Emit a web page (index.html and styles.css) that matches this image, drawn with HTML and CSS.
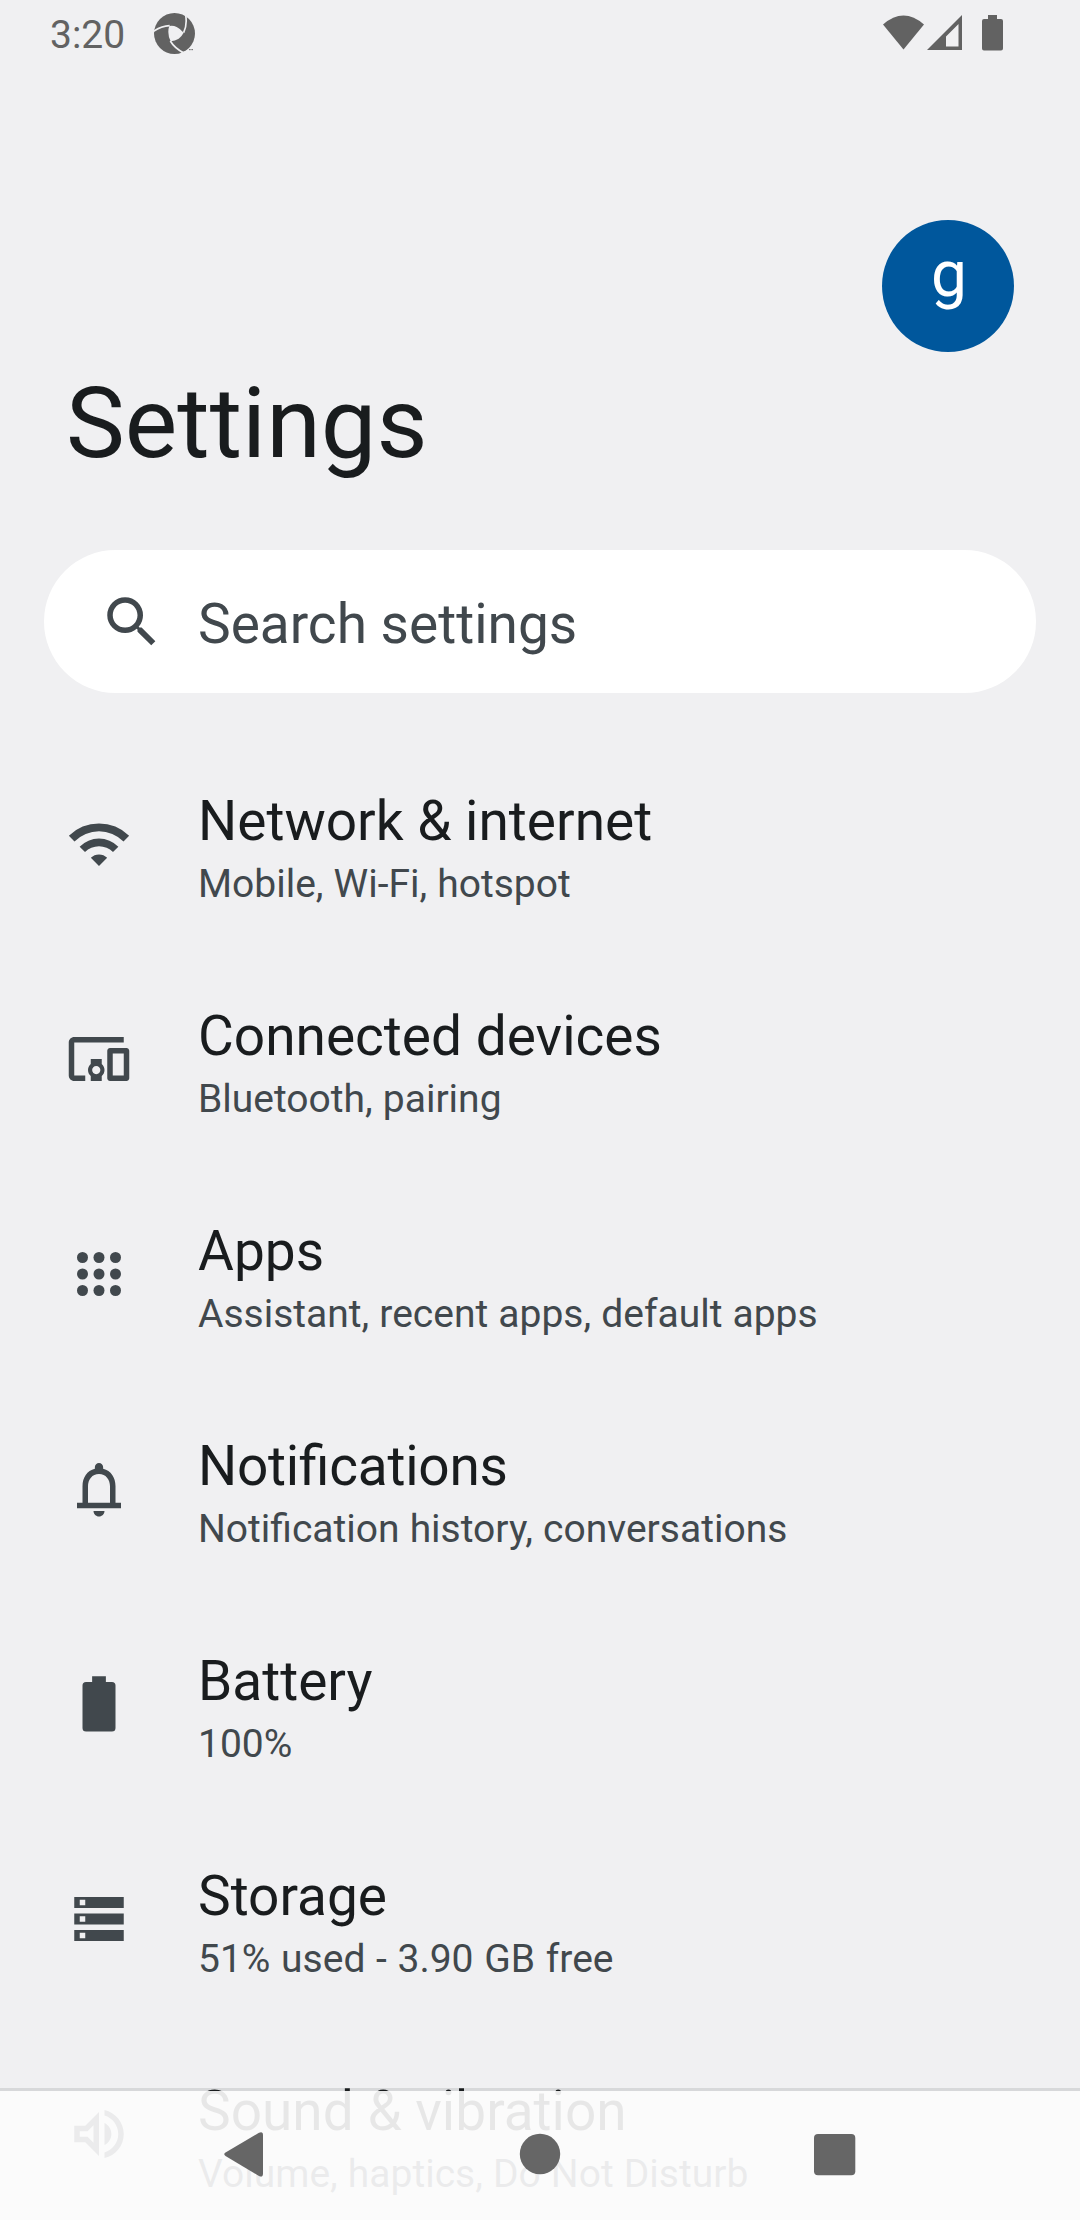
FILE: index.html
```html
<!DOCTYPE html>
<html lang="en">
<head>
<meta charset="utf-8">
<title>Settings</title>
<link rel="stylesheet" href="styles.css">
</head>
<body>
<div class="screen">
  <header class="status">
    <span class="clock">3:20</span>
    <svg class="shutter" viewBox="0 0 123 123">
      <circle cx="61.5" cy="61.5" r="61.5" fill="#626262"/>
      <path d="M46 39Q58 37 68 42Q80 48 89 59Q84 69 74 77Q63 84 50 85Q43 72 43 57Q43 46 46 39Z" fill="#f0f0f2"/>
      <path d="M47 38Q22 39 -2 55M89 59Q100 36 95 6M49 84Q61 105 91 121" fill="none" stroke="#f0f0f2" stroke-width="5"/>
      <path d="M101 9L104 14M80 119L116 105L125 125L80 125Z" fill="#f0f0f2"/>
      <path d="M105 110h5M112 110h5" stroke="#626262" stroke-width="3"/>
    </svg>
    <svg class="signals" viewBox="0 0 120 36">
      <path d="M0 9.500Q20.500-8.500 41 9.500L20.500 34.500Z"/>
      <path d="M44 35L79 0V35ZM63 31.500H75.500V9L63 21.500Z" fill-rule="evenodd"/>
      <path d="M105 0h9v4h4a2 2 0 0 1 2 2v27.500a2 2 0 0 1-2 2h-17a2 2 0 0 1-2-2V6a2 2 0 0 1 2-2h4z"/>
    </svg>
  </header>

  <div class="account"><div class="avatar">g</div></div>
  <h1 class="title">Settings</h1>

  <div class="search">
    <svg class="icon" viewBox="0 0 24 24"><path d="M15.500 14h-.79l-.28-.27A6.471 6.471 0 0 0 16 9.500 6.500 6.500 0 1 0 9.500 16c1.610 0 3.090-.59 4.230-1.570l.27.28v.79l5 4.990L20.490 19l-4.990-5zm-6 0C7.010 14 5 11.990 5 9.500S7.010 5 9.500 5 14 7.010 14 9.500 11.990 14 9.500 14z"/></svg>
    <span>Search settings</span>
  </div>

  <main class="list">
    <div class="row">
      <svg class="icon" viewBox="0 0 24 24"><path d="M1.040 9.040A15.500 15.500 0 0 1 22.960 9.040L20.910 11.090A12.600 12.600 0 0 0 3.090 11.090ZM4.960 12.960A9.950 9.950 0 0 1 19.040 12.960L17.090 14.910A7.200 7.200 0 0 0 6.910 14.910ZM9.030 17.030A4.200 4.200 0 0 1 14.970 17.030L12 20Z"/></svg>
      <div class="text"><div class="name">Network &amp; internet</div><div class="summary">Mobile, Wi-Fi, hotspot</div></div>
    </div>
    <div class="row">
      <svg class="icon" viewBox="0 0 24 24"><path d="M3 6h18V4H3c-1.100 0-2 .9-2 2v12c0 1.100.9 2 2 2h4v-2H3V6zm10 6H9v1.780c-.61.55-1 1.330-1 2.220s.39 1.670 1 2.220V20h4v-1.780c.61-.55 1-1.340 1-2.220s-.39-1.670-1-2.220V12zm-2 5.500c-.83 0-1.500-.67-1.500-1.500s.67-1.500 1.500-1.500 1.500.67 1.500 1.500-.67 1.500-1.500 1.500zM22 8h-6c-.5 0-1 .5-1 1v10c0 .5.5 1 1 1h6c.5 0 1-.5 1-1V9c0-.5-.5-1-1-1zm-1 10h-4v-8h4v8z"/></svg>
      <div class="text"><div class="name">Connected devices</div><div class="summary">Bluetooth, pairing</div></div>
    </div>
    <div class="row">
      <svg class="icon" viewBox="0 0 24 24"><circle cx="6" cy="6" r="2"/><circle cx="12" cy="6" r="2"/><circle cx="18" cy="6" r="2"/><circle cx="6" cy="12" r="2"/><circle cx="12" cy="12" r="2"/><circle cx="18" cy="12" r="2"/><circle cx="6" cy="18" r="2"/><circle cx="12" cy="18" r="2"/><circle cx="18" cy="18" r="2"/></svg>
      <div class="text"><div class="name">Apps</div><div class="summary">Assistant, recent apps, default apps</div></div>
    </div>
    <div class="row">
      <svg class="icon" viewBox="0 0 24 24"><path d="M18 17v-6c0-3.070-1.630-5.640-4.500-6.320V4c0-.83-.67-1.500-1.500-1.500s-1.500.67-1.500 1.500v.68C7.640 5.360 6 7.920 6 11v6H4v2h16v-2h-2zm-2 0H8v-6c0-2.480 1.510-4.500 4-4.500s4 2.020 4 4.500v6zM12 22c1.100 0 2-.9 2-2h-4c0 1.100.9 2 2 2z"/></svg>
      <div class="text"><div class="name name-tight">Notifications</div><div class="summary">Notification history, conversations</div></div>
    </div>
    <div class="row">
      <svg class="icon" viewBox="0 0 24 24"><path d="M9.500 1.900h5V4h2.200A1.300 1.300 0 0 1 18 5.300v15.400a1.300 1.300 0 0 1-1.300 1.300H7.300A1.300 1.300 0 0 1 6 20.700V5.300A1.300 1.300 0 0 1 7.300 4h2.200z"/></svg>
      <div class="text"><div class="name">Battery</div><div class="summary">100%</div></div>
    </div>
    <div class="row">
      <svg class="icon" viewBox="0 0 24 24"><path fill-rule="evenodd" d="M3 4h18v4H3zM5 5v2h2V5zM3 10h18v4H3zM5 11v2h2v-2zM3 16h18v4H3zM5 17v2h2v-2z"/></svg>
      <div class="text"><div class="name">Storage</div><div class="summary summary-figures">51% used - 3.90 GB free</div></div>
    </div>
    <div class="row">
      <svg class="icon" viewBox="0 0 24 24"><path d="M3 9v6h4l5 5V4L7 9H3zm7-.17v6.340L7.830 13H5v-2h2.830L10 8.830zM16.500 12c0-1.770-1.020-3.290-2.500-4.030v8.050c1.480-.73 2.500-2.250 2.500-4.020zM14 3.230v2.060c2.890.86 5 3.540 5 6.710s-2.110 5.850-5 6.710v2.060c4.010-.91 7-4.490 7-8.770s-2.990-7.860-7-8.770z"/></svg>
      <div class="text"><div class="name">Sound &amp; vibration</div><div class="summary">Volume, haptics, Do Not Disturb</div></div>
    </div>
  </main>

  <div class="divider"></div>
  <nav class="navbar">
    <svg viewBox="0 0 48 48"><path d="M41 5V43.500Q41 48 37 46L3.500 26Q1 24.300 3.500 22.600L37 2.700Q41 1 41 5Z"/></svg>
    <svg viewBox="0 0 48 48"><circle cx="24" cy="24" r="20.200"/></svg>
    <svg viewBox="0 0 48 48"><rect x="4" y="4" width="41.300" height="41.300" rx="4"/></svg>
  </nav>
</div>
</body>
</html>
```
FILE: styles.css
```css
* {
  box-sizing: border-box;
}

body {
  margin: 0;
  background: #f0f0f2;
  font-family: Roboto, sans-serif;
  color: #191c1e;
}

.screen {
  position: relative;
  z-index: 0;
  width: 1080px;
  height: 2220px;
  overflow: hidden;
}

.status {
  display: flex;
  align-items: flex-start;
  height: 66px;
  padding: 12px 77px 0 50px;
}

.clock {
  width: 104px;
  font-size: 39px;
  line-height: 47px;
  color: #626262;
}

.shutter {
  width: 41px;
  height: 41px;
  margin-top: 1px;
}

.signals {
  width: 120px;
  height: 36px;
  margin: 3px 0 0 auto;
  fill: #626262;
}

.account {
  display: flex;
  justify-content: flex-end;
  padding: 154px 66px 0;
}

.avatar {
  width: 132px;
  height: 132px;
  padding-left: 2px;
  border-radius: 50%;
  background: #00579c;
  color: #fff;
  font-size: 64px;
  line-height: 110px;
  text-align: center;
}

.title {
  margin: 13px 66px 69px;
  font-size: 99px;
  font-weight: 400;
  line-height: 116px;
}

.search {
  display: flex;
  align-items: center;
  gap: 33px;
  height: 143px;
  margin: 0 44px 44px;
  padding-left: 55px;
  border-radius: 72px;
  background: #fff;
  color: #41484d;
  font-size: 55px;
}

.search span {
  line-height: 64px;
  padding-top: 4px;
}

.icon {
  flex: none;
  width: 66px;
  height: 66px;
  fill: #41484d;
}

.row {
  display: flex;
  align-items: center;
  gap: 66px;
  height: 215px;
  padding-left: 66px;
}

.row .icon {
  margin-bottom: 1px;
}

.text {
  align-self: flex-start;
  padding-top: 52px;
}

.name {
  margin-bottom: 8px;
  font-size: 55px;
  line-height: 64px;
  white-space: nowrap;
}

.name-tight {
  letter-spacing: -0.25px;
  font-feature-settings: "liga";
}

.summary {
  font-size: 39px;
  line-height: 47px;
  word-spacing: 0.4px;
  color: #41484d;
  white-space: nowrap;
}

.summary-figures {
  word-spacing: 1px;
}

.divider {
  position: absolute;
  z-index: -1;
  left: 0;
  right: 0;
  bottom: 129px;
  height: 3px;
  background: #d7d8da;
}

.navbar {
  position: absolute;
  left: 0;
  right: 0;
  bottom: 0;
  display: flex;
  justify-content: center;
  gap: 246px;
  height: 129px;
  padding-top: 39px;
  background: rgba(252, 252, 252, 0.91);
}

.navbar svg {
  width: 48px;
  height: 48px;
  fill: #666;
}
```
